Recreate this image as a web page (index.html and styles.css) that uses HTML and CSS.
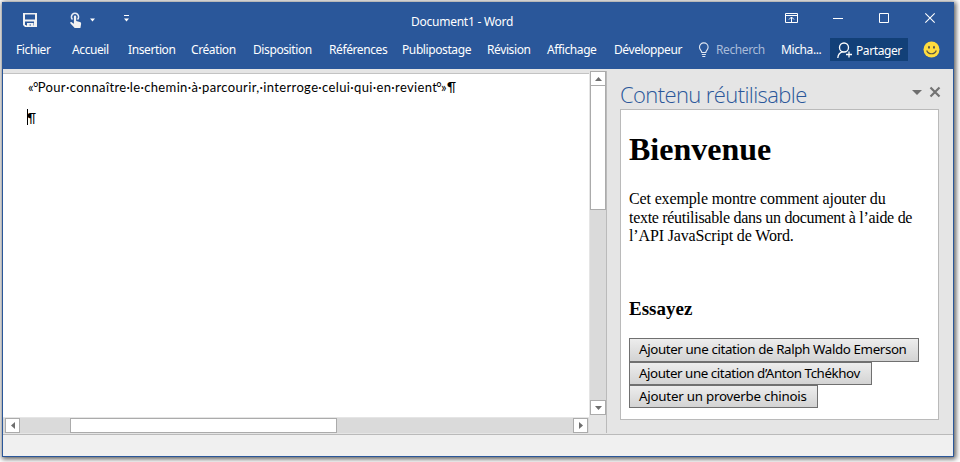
FILE: index.html
```html
<!DOCTYPE html>
<html lang="fr">
<head>
<meta charset="utf-8">
<title>Document1 - Word</title>
<link rel="stylesheet" href="styles.css">
</head>
<body>
<div class="window">
  <header class="header">
    <div class="titlebar">
      <svg class="quick" width="140" height="34" viewBox="0 0 140 34" fill="none">
        <path fill="#f2f2f2" fill-rule="evenodd" d="M20 10h14v14H22l-2-2zM22 11.500v5h10v-5zM22 18.500v3.500h1v.500h8v-4z"/>
        <path d="M24 20h6.500v3.500h-2.500v-2h-1.500v2H24z" fill="#f2f2f2"/>
        <path d="M69.500 16.500a3.600 3.600 0 1 1 5 0" stroke="#e6ebf5" stroke-width="1.500"/>
        <path d="M70.900 13.500c0-1.500 2.300-1.500 2.300 0v4.600l3.700 1c1 .3 1.400 1 1.200 2l-.7 4h-5.700l-4.200-4.500c-.9-1.200.5-2 1.500-1.200l1.900 1.400z" fill="#f2f2f2"/>
        <path d="M87 15.500h5L89.500 18.500z" fill="#fff"/>
        <path d="M121 12.500h5" stroke="#fff"/>
        <path d="M121 15.500h5L123.500 18.500z" fill="#fff"/>
      </svg>
      <div class="title">Document1 - Word</div>
      <svg class="controls" width="170" height="34" viewBox="0 0 170 34" fill="none" stroke="#fff">
        <path d="M2.500 10.500h12v9h-12zM2.500 12.500h12M8.500 19v-5M6 16.500l2.500-2.500 2.500 2.500"/>
        <path d="M50 15.500h10"/>
        <path d="M96.500 10.500h9v9h-9z"/>
        <path d="M142.300 10.300l9.400 9.400M151.700 10.300l-9.400 9.400" stroke-width="1.100"/>
      </svg>
    </div>
    <nav class="ribbon">
      <span>Fichier</span><span>Accueil</span><span>Insertion</span><span>Création</span><span>Disposition</span><span>Références</span><span>Publipostage</span><span>Révision</span><span>Affichage</span><span>Développeur</span>
      <svg class="bulb" width="12" height="16" viewBox="0 0 12 16" fill="none" stroke="#e3e9f3" stroke-width="1.100"><path d="M3.800 10.500C3.800 8.500 1.500 8 1.500 5.200a4.300 4.300 0 0 1 8.600 0c0 2.800-2.300 3.300-2.300 5.300zM3.800 12.500h4M4.300 14.500h3"/></svg>
      <span class="search">Recherch</span><span class="user">Micha...</span>
      <button class="share"><svg width="16" height="17" viewBox="0 0 16 17" fill="none" stroke="#fff" stroke-width="1.300"><path d="M.8 16c.3-3.700 2-5.500 4.500-6.200M7 1a4.500 4.500 0 1 1 0 9 4.500 4.500 0 0 1 0-9zM12 9.500v6M9 12.500h6"/></svg><span>Partager</span></button>
      <svg class="smile" width="17" height="17" viewBox="0 0 17 17"><circle cx="8.500" cy="8.500" r="8" fill="#ffdc3e"/><ellipse cx="6" cy="6.300" rx=".9" ry="1.500" fill="#53524a"/><ellipse cx="11" cy="6.300" rx=".9" ry="1.500" fill="#53524a"/><path d="M3.700 9.500c1.500 4.300 8.100 4.300 9.600 0" fill="none" stroke="#53524a" stroke-width="1.200"/></svg>
    </nav>
  </header>
  <main class="workspace">
    <section class="editor">
      <article class="page">
        <p class="quote">«<span class="nbsp-mark">°</span>Pour·connaître·le·chemin·à·parcourir,·interroge·celui·qui·en·revient<span class="nbsp-mark">°</span>»¶</p>
        <p class="caret"><span>¶</span></p>
      </article>
      <div class="vscroll">
        <div class="arrow"><svg width="7" height="4" viewBox="0 0 7 4"><path d="M0 4h7L3.500 0z"/></svg></div>
        <div class="vthumb"></div>
        <div class="arrow vend"><svg width="7" height="4" viewBox="0 0 7 4"><path d="M0 0h7L3.500 4z"/></svg></div>
      </div>
      <div class="hscroll">
        <div class="arrow"><svg width="4" height="7" viewBox="0 0 4 7"><path d="M4 0v7L0 3.500z"/></svg></div>
        <div class="hthumb"></div>
        <div class="arrow hend"><svg width="4" height="7" viewBox="0 0 4 7"><path d="M0 0v7L4 3.500z"/></svg></div>
      </div>
    </section>
    <aside class="pane">
      <div class="pane-head">
        <h2><span>Contenu réutilisable</span></h2>
        <svg width="29" height="12" viewBox="0 0 29 12"><path d="M0 4h10L5 9z" fill="#6e6e6e"/><path d="M18.500 1.500l9 9M27.500 1.500l-9 9" stroke="#737373" stroke-width="2.200"/></svg>
      </div>
      <div class="pane-body">
        <h1>Bienvenue</h1>
        <p class="intro">Cet exemple montre comment ajouter du<br><span class="tight">texte réutilisable dans un document à l’aide de</span><br>l’API JavaScript de Word.</p>
        <h3>Essayez</h3>
        <button class="action emerson"><span>Ajouter une citation de Ralph Waldo Emerson</span></button>
        <button class="action tchekhov"><span>Ajouter une citation d’Anton Tchékhov</span></button>
        <button class="action chinois"><span>Ajouter un proverbe chinois</span></button>
      </div>
    </aside>
  </main>
  <footer class="status"></footer>
</div>
</body>
</html>
```
FILE: styles.css
```css
* { box-sizing: border-box; }
body { margin: 0; width: 960px; height: 462px; overflow: hidden; background: #fff; padding: 2px; font-family: "Noto Sans", sans-serif; }
.window { width: 952px; height: 455px; border: 1px solid #2a579a; background: #e5e5e5; box-shadow: 1px 1px 5px 1px rgba(0,0,0,.65); display: flex; flex-direction: column; }
.header { height: 66px; background: #2a579a; color: #fff; flex: none; font-size: 12px; }
.titlebar { height: 34px; display: grid; grid-template-columns: 408px 372px 170px; }
.title { font-size: 12px; letter-spacing: -.25px; line-height: 17px; padding-top: 10px; white-space: nowrap; }
.ribbon { height: 24px; padding-left: 13px; display: grid; grid-template-columns: 56px 56px 63px 62px 76px 73px 85px 60px 67px 84px 18px 65px 49px 78px 32px; align-items: center; letter-spacing: -.4px; line-height: 17px; white-space: nowrap; }
.ribbon > span { padding-top: 1px; }
.ribbon .search { color: #a9bcd9; }
.bulb { margin-top: 1px; }
.share { width: 78px; height: 23px; margin-top: 1px; background: #124078; border: 0; color: #fff; padding: 0 0 0 7px; display: flex; align-items: center; gap: 3px; font: 12px/17px "Noto Sans", sans-serif; letter-spacing: -.4px; }
.share svg { margin-top: 2px; }
.share span { padding-top: 1px; }
.smile { margin-left: 15px; }
.workspace { height: 365px; display: grid; grid-template-columns: 604px 1fr; }
.editor { margin-top: 2px; height: 362px; border-right: 1px solid #bababa; display: grid; grid-template: 347px 15px / 587px 16px; }
.page { margin-top: 2px; width: 586px; height: 344px; border-top: 1px solid #c3c3c3; background: #fff; color: #000; font: 13px Lato, sans-serif; padding: 3px 0 0 25px; }
.page p { margin: 0; height: 21px; line-height: 21px; white-space: nowrap; }
.page .quote { letter-spacing: .36px; }
.nbsp-mark { margin: 0 -1px; }
.page .caret { margin: 11px 0 0 -1px; height: 16px; line-height: 18px; border-left: 1px solid #000; }
.caret span { margin-left: -1px; }
.vscroll { width: 16px; height: 344px; background: #dadada; display: flex; flex-direction: column; }
.arrow { width: 16px; height: 15px; border: 1px solid #ababab; background: #fff; display: grid; place-items: center; flex: none; fill: #6e6e6e; }
.vthumb { height: 125px; border: 1px solid #ababab; margin-top: -1px; background: #fff; }
.vend { margin-top: auto; }
.hscroll { width: 586px; height: 15px; background: #dadada; display: flex; padding: 0 1px 0 2px; }
.hscroll .arrow { width: 15px; height: 15px; }
.hthumb { width: 267px; height: 15px; margin-left: 50px; border: 1px solid #ababab; background: #fff; }
.hend { margin-left: auto; }
.pane { padding: 12px 0 0 13px; }
.pane-head { height: 28px; display: flex; justify-content: space-between; padding-right: 12px; }
.pane-head h2 { margin: 0; color: #2a579a; font: 300 22px/26px "Open Sans", sans-serif; letter-spacing: -.6px; }
.pane-head svg { margin-top: 5px; }
.pane-body { width: 319px; height: 311px; border: 1px solid #bababa; background: #fff; padding: 20px 8px; font-family: "Liberation Serif", serif; color: #000; }
h1 { font-size: 32px; line-height: 38px; margin: 0; }
.intro { font-size: 16px; line-height: 18.500px; margin: 22px 0 0; letter-spacing: -.14px; white-space: nowrap; }
.tight { letter-spacing: -.3px; }
h3 { font-size: 19px; line-height: 22px; margin: 52px 0 18px; }
.action { display: block; margin: 0; padding: 0 0 0 9px; text-align: left; border: 1px solid #707070; background: linear-gradient(#ededed, #d3d3d3); font: 13.330px/20px "Noto Sans", sans-serif; white-space: nowrap; color: #000; }
.emerson { width: 290px; height: 24px; letter-spacing: -.38px; padding-bottom: 1px; }
.tchekhov { width: 243px; height: 23px; letter-spacing: -.43px; }
.chinois { width: 189px; height: 23px; letter-spacing: -.23px; }
.status { height: 22px; border-top: 1px solid #bababa; background: #f0f0f0; }
```
